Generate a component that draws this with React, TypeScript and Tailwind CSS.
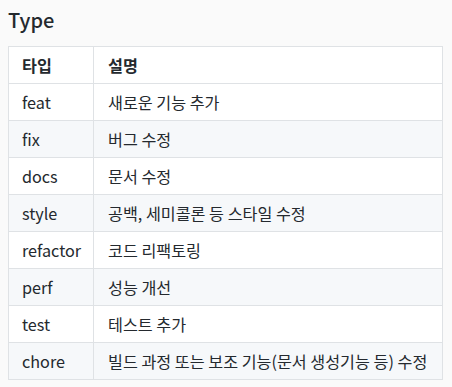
const rows: [string, string][] = [
  ["feat", "새로운 기능 추가"],
  ["fix", "버그 수정"],
  ["docs", "문서 수정"],
  ["style", "공백, 세미콜론 등 스타일 수정"],
  ["refactor", "코드 리팩토링"],
  ["perf", "성능 개선"],
  ["test", "테스트 추가"],
  ["chore", "빌드 과정 또는 보조 기능(문서 생성기능 등) 수정"],
];

export default function App() {
  return (
    <div className="h-[387px] w-[452px] bg-[#fafafa] px-2 pt-[6px] font-['Noto_Sans_CJK_KR','Noto_Sans',sans-serif] text-[#24292e]">
      <h2 className="h-[40px] text-[20px] font-medium leading-[28px]">Type</h2>
      <table className="w-[435px] table-fixed border-collapse text-[16.2px]">
        <thead>
          <tr className="bg-white">
            <th className="h-[37px] w-[85px] border border-[#dfe2e5] pl-[13px] pr-0 text-left font-bold">타입</th>
            <th className="h-[37px] border border-[#dfe2e5] pl-[14px] pr-2 text-left font-bold">설명</th>
          </tr>
        </thead>
        <tbody>
          {rows.map(([type, desc], i) => (
            <tr key={type} className={i % 2 === 1 ? "bg-[#f6f8fa]" : "bg-white"}>
              <td className="h-[37px] whitespace-nowrap border border-[#dfe2e5] pl-[13px] pr-0">{type}</td>
              <td className="h-[37px] whitespace-nowrap border border-[#dfe2e5] pl-[14px] pr-2">{desc}</td>
            </tr>
          ))}
        </tbody>
      </table>
    </div>
  );
}
